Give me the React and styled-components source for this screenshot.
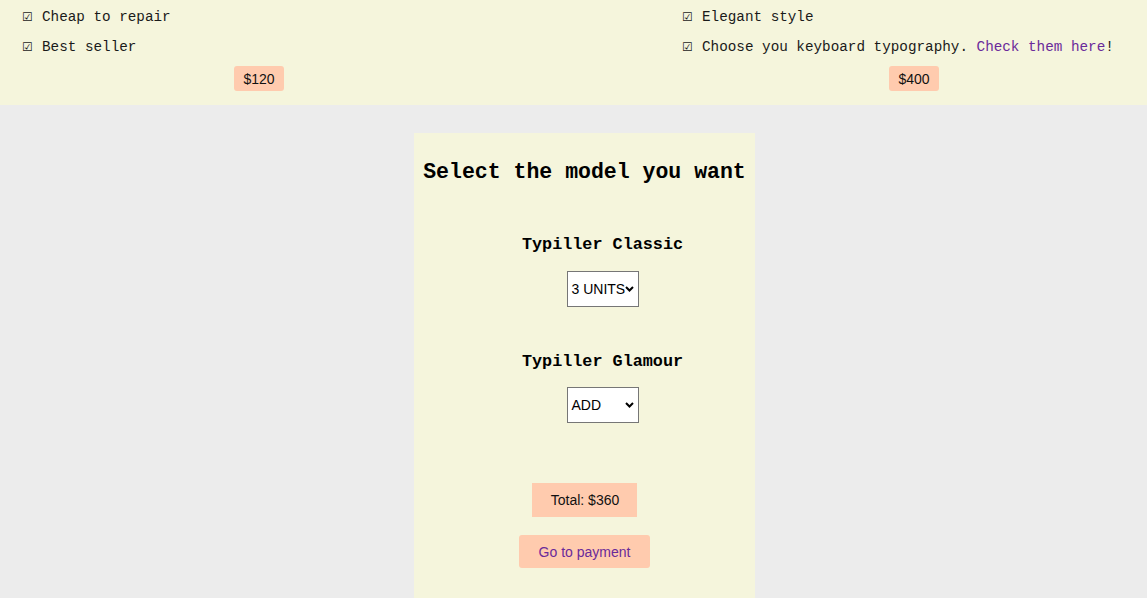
import React from "react";
import styled, { createGlobalStyle } from "styled-components";

const Global = createGlobalStyle`
  html, body { margin: 0; padding: 0; background: #ececec; }
  body { font-family: "Liberation Sans", Arial, sans-serif; }
`;

const Band = styled.section`
  background: #f5f5dc;
  display: flex;
  height: 105px;
  overflow: hidden;
`;

const Card = styled.div`
  width: ${(p) => p.$w}px;
  flex: none;
  display: flex;
  flex-direction: column;
`;

const List = styled.ul`
  list-style: none;
  margin: 0;
  padding: 2px 0 0 22px;
`;

const Item = styled.li`
  display: flex;
  align-items: center;
  height: 30px;
  font-family: "Liberation Mono", "Courier New", monospace;
  font-size: 14.3px;
  color: #1a1a1a;
  white-space: pre;
`;

const Check = styled.span`
  width: 20px;
  flex: none;
  font-family: "DejaVu Sans", sans-serif;
  font-size: 12px;
`;

const Link = styled.a`
  color: #6a2a9a;
  text-decoration: none;
`;

const PriceRow = styled.div`
  width: ${(p) => p.$w}px;
  display: flex;
  justify-content: center;
  margin-top: 4px;
`;

const Price = styled.span`
  background: #ffcbae;
  border-radius: 3px;
  height: 25px;
  padding: 0 9px;
  display: flex;
  align-items: center;
  font-size: 14px;
  color: #111;
`;

const Main = styled.main`
  display: flex;
  justify-content: center;
  padding: 28px 0 0 22px;
`;

const Panel = styled.div`
  width: 341px;
  min-height: 480px;
  background: #f5f5dc;
  display: flex;
  flex-direction: column;
  align-items: center;
  padding-top: 26px;
  box-sizing: border-box;
`;

const Heading = styled.h2`
  margin: 0;
  font-family: "Liberation Mono", "Courier New", monospace;
  font-size: 21.5px;
  line-height: 26px;
  font-weight: bold;
  color: #000;
  white-space: nowrap;
`;

const Models = styled.div`
  display: flex;
  flex-direction: column;
  align-items: center;
  padding-left: 36px;
  margin-top: 50px;
`;

const ModelTitle = styled.h3`
  margin: ${(p) => (p.$first ? "0 0 16px" : "45px 0 15px")};
  font-family: "Liberation Mono", "Courier New", monospace;
  font-size: 16.8px;
  line-height: 20px;
  font-weight: bold;
  color: #000;
`;

const SelectWrap = styled.div`
  position: relative;
  width: 72px;
  height: 36px;
  margin-left: 2px;
`;

const Select = styled.select`
  appearance: none;
  -webkit-appearance: none;
  width: 100%;
  height: 100%;
  font-family: "Liberation Sans", Arial, sans-serif;
  font-size: 14px;
  color: #000;
  background: #fff;
  border: 1px solid #767676;
  border-radius: 0;
  padding: 0 0 0 3px;
  margin: 0;
  box-sizing: border-box;
  outline: none;
`;

const Chevron = styled.svg`
  position: absolute;
  right: 5px;
  top: 50%;
  margin-top: -3px;
  width: 9px;
  height: 6px;
  pointer-events: none;
`;

const Total = styled.div`
  margin-top: 60px;
  background: #ffcbae;
  height: 34px;
  padding: 0 18px 0 19px;
  display: flex;
  align-items: center;
  font-size: 14px;
  color: #111;
`;

const PayButton = styled.a`
  margin-top: 18px;
  background: #ffcbae;
  border-radius: 3px;
  height: 33px;
  width: 131px;
  display: flex;
  align-items: center;
  justify-content: center;
  font-size: 14px;
  color: #6a2a9a;
  text-decoration: none;
`;

function UnitSelect({ value }) {
  return (
    <SelectWrap>
      <Select defaultValue={value}>
        <option value="0">ADD</option>
        <option value="1">1 UNIT</option>
        <option value="2">2 UNITS</option>
        <option value="3">3 UNITS</option>
      </Select>
      <Chevron viewBox="0 0 9 6">
        <path d="M1 1 L4.5 4.5 L8 1" fill="none" stroke="#000" strokeWidth="2" />
      </Chevron>
    </SelectWrap>
  );
}

export default function App() {
  return (
    <>
      <Global />
      <Band>
        <Card $w={660}>
          <List>
            <Item><Check>☑</Check>Cheap to repair</Item>
            <Item><Check>☑</Check>Best seller</Item>
          </List>
          <PriceRow $w={518}><Price>$120</Price></PriceRow>
        </Card>
        <Card $w={487}>
          <List>
            <Item><Check>☑</Check>Elegant style</Item>
            <Item>
              <Check>☑</Check>{"Choose you keyboard typography. "}
              <Link href="#">Check them here</Link>!
            </Item>
          </List>
          <PriceRow $w={508}><Price>$400</Price></PriceRow>
        </Card>
      </Band>
      <Main>
        <Panel>
          <Heading>Select the model you want</Heading>
          <Models>
            <ModelTitle $first>Typiller Classic</ModelTitle>
            <UnitSelect value="3" />
            <ModelTitle>Typiller Glamour</ModelTitle>
            <UnitSelect value="0" />
          </Models>
          <Total>Total: $360</Total>
          <PayButton href="#">Go to payment</PayButton>
        </Panel>
      </Main>
    </>
  );
}
